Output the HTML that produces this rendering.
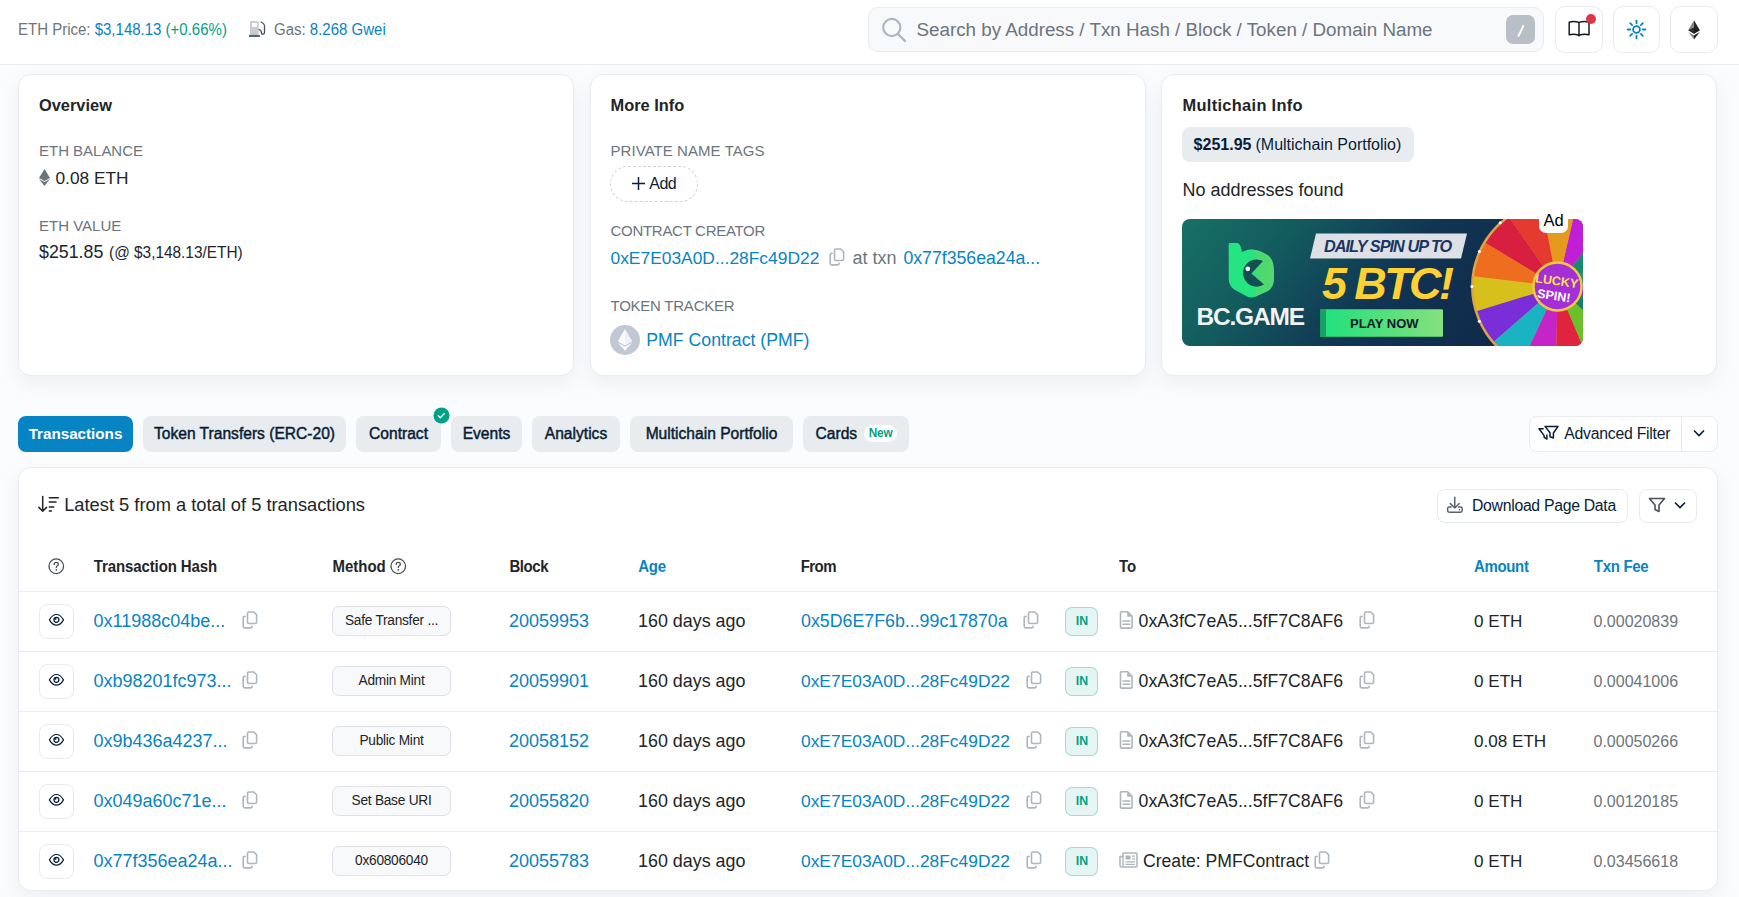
<!DOCTYPE html>
<html><head><meta charset="utf-8"><title>Etherscan</title>
<style>
html,body{margin:0;padding:0;}
body{width:1739px;height:897px;overflow:hidden;position:relative;background:#fbfcfd;font-family:"Liberation Sans",sans-serif;}
.a{position:absolute;}
.t{position:absolute;white-space:nowrap;line-height:1;}
.card{position:absolute;background:#fff;border:1px solid #e9ecef;border-radius:13px;box-sizing:border-box;box-shadow:0 8px 19px rgba(189,197,209,0.22);}
</style></head><body>
<div class="a" style="left:0px;top:0px;width:1739px;height:64px;background:#fff;border-bottom:1px solid #e9ecef;"></div>
<div class="t" style="left:18.00px;top:22.00px;font-size:15px;color:#6c757d;font-weight:400;transform:scaleY(1.15);transform-origin:0 13px;">ETH Price: <span style="color:#0784c3">$3,148.13</span> <span style="color:#00a186">(+0.66%)</span></div>
<svg class="a" style="left:249px;top:21px" width="17" height="17" viewBox="0 0 17 17"><rect x="1" y="0" width="8.7" height="14" rx="1.3" fill="#c8cbd0"/><rect x="2.9" y="1.9" width="5" height="4" fill="#fff"/><rect x="0" y="13.9" width="10.9" height="2.1" fill="#5a6470"/><path d="M10 8.6 Q12 8.8 12.3 10.8 L12.4 12 Q12.8 13.4 14 13.2 Q15.5 13 15.5 11.4 L15.5 4.5 Q15.3 2.6 12.2 1" fill="none" stroke="#495057" stroke-width="1.3" stroke-linecap="round"/></svg>
<div class="t" style="left:274.00px;top:22.00px;font-size:15px;color:#6c757d;font-weight:400;transform:scaleY(1.15);transform-origin:0 13px;">Gas: <span style="color:#0784c3">8.268 Gwei</span></div>
<div class="a" style="left:868px;top:7px;width:676px;height:45px;background:#f8f9fa;border:1px solid #e9ecef;border-radius:10px;box-sizing:border-box;"></div>
<svg class="a" style="left:880px;top:16px" width="28" height="28" viewBox="0 0 28 28"><circle cx="11.8" cy="11.5" r="8.6" fill="none" stroke="#adb5bd" stroke-width="2.2"/><line x1="18" y1="18" x2="25" y2="25" stroke="#adb5bd" stroke-width="2.4" stroke-linecap="round"/></svg>
<div class="t" style="left:916.50px;top:20.60px;font-size:18.8px;color:#6c757d;font-weight:400;">Search by Address / Txn Hash / Block / Token / Domain Name</div>
<div class="a" style="left:1506px;top:15px;width:29px;height:29px;background:#b9bfc6;border-radius:7px;"></div>
<svg class="a" style="left:1506px;top:15px" width="29" height="29" viewBox="0 0 29 29"><line x1="17.6" y1="10.3" x2="12.2" y2="21.5" stroke="#fff" stroke-width="1.9"/></svg>
<div class="a" style="left:1555.2px;top:6px;width:47.4px;height:47.4px;background:#fff;border:1px solid #e9ecef;border-radius:10px;box-sizing:border-box;"></div>
<div class="a" style="left:1612.8px;top:6px;width:47.4px;height:47.4px;background:#fff;border:1px solid #e9ecef;border-radius:10px;box-sizing:border-box;"></div>
<div class="a" style="left:1670.2px;top:6px;width:47.4px;height:47.4px;background:#fff;border:1px solid #e9ecef;border-radius:10px;box-sizing:border-box;"></div>
<svg class="a" style="left:1566px;top:18px" width="26" height="22" viewBox="0 0 26 22"><path d="M3.2 4.2 Q8 2.6 13 4.4 Q18 2.6 23 4.2 V16.8 Q18 15.8 13.6 17 L13 17.8 L12.4 17 Q8 15.8 3.2 16.8 Z M13 4.4 V17.2" fill="none" stroke="#111820" stroke-width="1.45" stroke-linejoin="round"/></svg>
<div class="a" style="left:1586px;top:14px;width:10px;height:10px;border-radius:50%;background:#dc3545"></div>
<svg class="a" style="left:1625px;top:18px" width="23" height="23" viewBox="0 0 23 23"><circle cx="11.5" cy="11.5" r="3.4" fill="none" stroke="#0784c3" stroke-width="1.8"/><line x1="17.70" y1="11.50" x2="20.40" y2="11.50" stroke="#0784c3" stroke-width="1.8" stroke-linecap="round"/><line x1="15.88" y1="15.88" x2="17.79" y2="17.79" stroke="#0784c3" stroke-width="1.8" stroke-linecap="round"/><line x1="11.50" y1="17.70" x2="11.50" y2="20.40" stroke="#0784c3" stroke-width="1.8" stroke-linecap="round"/><line x1="7.12" y1="15.88" x2="5.21" y2="17.79" stroke="#0784c3" stroke-width="1.8" stroke-linecap="round"/><line x1="5.30" y1="11.50" x2="2.60" y2="11.50" stroke="#0784c3" stroke-width="1.8" stroke-linecap="round"/><line x1="7.12" y1="7.12" x2="5.21" y2="5.21" stroke="#0784c3" stroke-width="1.8" stroke-linecap="round"/><line x1="11.50" y1="5.30" x2="11.50" y2="2.60" stroke="#0784c3" stroke-width="1.8" stroke-linecap="round"/><line x1="15.88" y1="7.12" x2="17.79" y2="5.21" stroke="#0784c3" stroke-width="1.8" stroke-linecap="round"/></svg>
<svg class="a" style="left:1687px;top:19px" width="14" height="22" viewBox="0 0 14 22"><path d="M7 1.3 L1.2 11.3 L7 14.7 Z" fill="#8c8480"/><path d="M7 1.3 L12.9 11.3 L7 14.7 Z" fill="#2a2628"/><path d="M1.2 11.3 L7 8.6 L12.9 11.3 L7 14.7 Z" fill="#1a1a1f" opacity="0.85"/><path d="M1.4 12.9 L7 16.2 L7 20.5 Z" fill="#8c8480"/><path d="M12.8 12.9 L7 16.2 L7 20.5 Z" fill="#2a2628"/></svg>
<div class="card" style="left:18.00px;top:74px;width:556.00px;height:302px;"></div>
<div class="card" style="left:589.50px;top:74px;width:556.00px;height:302px;"></div>
<div class="card" style="left:1161.00px;top:74px;width:556.00px;height:302px;"></div>
<div class="t" style="left:39.00px;top:96.50px;font-size:16.4px;color:#212529;font-weight:700;">Overview</div>
<div class="t" style="left:39.00px;top:143.00px;font-size:15px;color:#6c757d;font-weight:400;letter-spacing:-0.02px;">ETH BALANCE</div>
<svg class="a" style="left:39px;top:169px" width="11" height="17" viewBox="0 0 11 17"><path d="M5.5 0 L11 9 L5.5 12 L0 9 Z" fill="#6c757d"/><path d="M5.5 13 L11 10 L5.5 17 L0 10 Z" fill="#6c757d"/></svg>
<div class="t" style="left:55.50px;top:169.60px;font-size:17.3px;color:#212529;font-weight:400;">0.08 ETH</div>
<div class="t" style="left:39.00px;top:218.20px;font-size:15px;color:#6c757d;font-weight:400;letter-spacing:0px;">ETH VALUE</div>
<div class="t" style="left:39.00px;top:243.70px;font-size:17.8px;color:#212529;font-weight:400;">$251.85</div>
<div class="t" style="left:109.00px;top:244.70px;font-size:15.4px;color:#212529;font-weight:400;transform:scaleY(1.1);transform-origin:0 13px;">(@ $3,148.13/ETH)</div>
<div class="t" style="left:610.50px;top:96.50px;font-size:16.4px;color:#212529;font-weight:700;">More Info</div>
<div class="t" style="left:610.50px;top:142.60px;font-size:15px;color:#6c757d;font-weight:400;letter-spacing:0.06px;">PRIVATE NAME TAGS</div>
<div class="a" style="left:609.8px;top:166px;width:88.4px;height:36px;border:1px dashed #ced4da;border-radius:18px;box-sizing:border-box;"></div>
<svg class="a" style="left:632px;top:176.5px" width="13" height="13" viewBox="0 0 13 13"><path d="M6.5 0 V13 M0 6.5 H13" stroke="#081d35" stroke-width="1.45"/></svg>
<div class="t" style="left:649.20px;top:175.80px;font-size:16px;color:#081d35;font-weight:400;letter-spacing:-0.45px;">Add</div>
<div class="t" style="left:610.50px;top:222.60px;font-size:15px;color:#6c757d;font-weight:400;letter-spacing:-0.29px;">CONTRACT CREATOR</div>
<div class="t" style="left:610.50px;top:249.70px;font-size:17.4px;color:#0784c3;font-weight:400;">0xE7E03A0D...28Fc49D22</div>
<svg class="a" style="left:827.50px;top:247.30px" width="17" height="19" viewBox="0 0 17 19"><path d="M8 2 H12.8 L15.6 4.8 V12 Q15.6 13.5 14.1 13.5 H8 Q6.5 13.5 6.5 12 V3.5 Q6.5 2 8 2 Z" fill="none" stroke="#adb5bd" stroke-width="1.6" stroke-linejoin="round"/><path d="M4 6.4 H3.8 Q2.2 6.4 2.2 8 V16.3 Q2.2 17.9 3.8 17.9 H9.7 Q11.2 17.9 11.2 16.3" fill="none" stroke="#adb5bd" stroke-width="1.6" stroke-linecap="round"/></svg>
<div class="t" style="left:852.60px;top:248.70px;font-size:18px;color:#6c757d;font-weight:400;">at txn</div>
<div class="t" style="left:903.40px;top:249.70px;font-size:17.7px;color:#0784c3;font-weight:400;">0x77f356ea24a...</div>
<div class="t" style="left:610.50px;top:298.00px;font-size:15px;color:#6c757d;font-weight:400;letter-spacing:-0.24px;">TOKEN TRACKER</div>
<svg class="a" style="left:610px;top:325px" width="30" height="30" viewBox="0 0 30 30"><circle cx="15" cy="15" r="15" fill="#bfc8d3"/><path d="M15 4 L22 16.2 L15 20.4 L7.8 16.2 Z" fill="#fafbfc"/><path d="M15 4 L22 16.2 L15 20.4 Z" fill="#eef0f3"/><path d="M15 21.8 L22 17.8 L15 25.7 L7.8 17.8 Z" fill="#fafbfc"/></svg>
<div class="t" style="left:646.30px;top:332.00px;font-size:17.7px;color:#0784c3;font-weight:400;">PMF Contract (PMF)</div>
<div class="t" style="left:1182.50px;top:96.60px;font-size:16.4px;color:#212529;font-weight:700;letter-spacing:0.32px;">Multichain Info</div>
<div class="a" style="left:1182px;top:127px;width:232px;height:35px;background:#e9ecef;border-radius:8px;"></div>
<div class="t" style="left:1193.60px;top:137.00px;font-size:16px;color:#081d35;font-weight:700;">$251.95</div>
<div class="t" style="left:1255.50px;top:137.00px;font-size:16px;color:#081d35;font-weight:400;">(Multichain Portfolio)</div>
<div class="t" style="left:1182.50px;top:180.80px;font-size:18px;color:#212529;font-weight:400;">No addresses found</div>
<svg class="a" style="left:1182px;top:219px" width="401" height="127" viewBox="0 0 401 127">
<defs>
<linearGradient id="bg" x1="0" y1="0" x2="1" y2="0.25"><stop offset="0" stop-color="#177166"/><stop offset="0.28" stop-color="#135b5e"/><stop offset="0.6" stop-color="#103553"/><stop offset="1" stop-color="#10284a"/></linearGradient>
<clipPath id="cp"><rect x="0" y="0" width="401" height="127" rx="8"/></clipPath>
<linearGradient id="btn" x1="0" y1="0" x2="1" y2="0"><stop offset="0" stop-color="#22e07c"/><stop offset="1" stop-color="#86e07e"/></linearGradient>
<linearGradient id="lg" x1="0" y1="0" x2="1" y2="0"><stop offset="0.55" stop-color="#26e482"/><stop offset="0.6" stop-color="#48d873"/><stop offset="1" stop-color="#58d86c"/></linearGradient>
</defs>
<g clip-path="url(#cp)">
<rect width="401" height="127" fill="url(#bg)"/>
<path d="M46.7 25 Q46.7 24 48 24 L55 24 Q58.5 24 60 33 Q66 30 71 30.4 Q80 31.5 87 37 Q92 42 92 52 L92 60 Q92 68 86 72 L74 77.5 Q69.4 79.5 65 77.5 L53 71 Q46.7 67 46.7 60 Z" fill="url(#lg)"/>
<path d="M69.4 54.5 L81 42 A13.6 13.6 0 1 0 82 65.5 Z" fill="#124f52"/>
<circle cx="65.8" cy="49.8" r="2.4" fill="#f4f4f4"/>
<text x="14.5" y="106.2" font-family="Liberation Sans" font-weight="700" font-size="24.5" fill="#f2f2f2" letter-spacing="-1.2">BC.GAME</text>
<path d="M134 14.5 L285 14.5 L279 39.5 L128 39.5 Z" fill="#dde1e6"/>
<text x="142" y="33.2" font-family="Liberation Sans" font-weight="700" font-style="italic" font-size="16.3" fill="#1b3563" letter-spacing="-1">DAILY SPIN UP TO</text>
<text x="140" y="80" font-family="Liberation Sans" font-weight="700" font-style="italic" font-size="45" fill="#ffd134" letter-spacing="-2.6">5 BTC!</text>
<rect x="138" y="90" width="122" height="28" fill="#1a9e62"/>
<rect x="144" y="90.5" width="117" height="27" fill="url(#btn)"/>
<text x="168" y="108.5" font-family="Liberation Sans" font-weight="700" font-size="13" fill="#0b1a2a">PLAY NOW</text>
<g transform="translate(375.5 67.4)">
<circle r="86.5" fill="#e0a448"/>
<path d="M0 0 L-80.3 24.6 A84 84 0 0 1 -83.4 -10.2 Z" fill="#d8c01c"/><path d="M0 0 L-63.4 55.1 A84 84 0 0 1 -80.3 24.6 Z" fill="#7a2ed8"/><path d="M0 0 L-35.5 76.1 A84 84 0 0 1 -63.4 55.1 Z" fill="#19b3c2"/><path d="M0 0 L-1.5 84.0 A84 84 0 0 1 -35.5 76.1 Z" fill="#c524c8"/><path d="M0 0 L32.8 77.3 A84 84 0 0 1 -1.5 84.0 Z" fill="#e0243f"/><path d="M0 0 L61.4 57.3 A84 84 0 0 1 32.8 77.3 Z" fill="#6bc12a"/><path d="M0 0 L79.4 27.3 A84 84 0 0 1 61.4 57.3 Z" fill="#17806a"/><path d="M0 0 L83.7 -7.3 A84 84 0 0 1 79.4 27.3 Z" fill="#9a2bd0"/><path d="M0 0 L73.5 -40.7 A84 84 0 0 1 83.7 -7.3 Z" fill="#1a9a73"/><path d="M0 0 L50.6 -67.1 A84 84 0 0 1 73.5 -40.7 Z" fill="#138a72"/><path d="M0 0 L18.9 -81.8 A84 84 0 0 1 50.6 -67.1 Z" fill="#c01fd6"/><path d="M0 0 L-16.0 -82.5 A84 84 0 0 1 18.9 -81.8 Z" fill="#e59a1e"/><path d="M0 0 L-48.2 -68.8 A84 84 0 0 1 -16.0 -82.5 Z" fill="#e53a2f"/><path d="M0 0 L-72.0 -43.3 A84 84 0 0 1 -48.2 -68.8 Z" fill="#d81f3f"/><path d="M0 0 L-83.4 -10.2 A84 84 0 0 1 -72.0 -43.3 Z" fill="#ee6d1e"/><circle cx="-85.6" cy="-0.0" r="1.5" fill="#fff"/><circle cx="-78.2" cy="-34.8" r="1.5" fill="#fff"/><circle cx="-57.3" cy="-63.6" r="1.5" fill="#fff"/><circle cx="-26.5" cy="-81.4" r="1.5" fill="#fff"/><circle cx="8.9" cy="-85.1" r="1.5" fill="#fff"/><circle cx="42.8" cy="-74.1" r="1.5" fill="#fff"/><circle cx="69.3" cy="-50.3" r="1.5" fill="#fff"/><circle cx="83.7" cy="-17.8" r="1.5" fill="#fff"/><circle cx="83.7" cy="17.8" r="1.5" fill="#fff"/><circle cx="69.3" cy="50.3" r="1.5" fill="#fff"/><circle cx="42.8" cy="74.1" r="1.5" fill="#fff"/><circle cx="8.9" cy="85.1" r="1.5" fill="#fff"/><circle cx="-26.5" cy="81.4" r="1.5" fill="#fff"/><circle cx="-57.3" cy="63.6" r="1.5" fill="#fff"/><circle cx="-78.2" cy="34.8" r="1.5" fill="#fff"/><circle r="24" fill="#a52fd6" stroke="#f3c640" stroke-width="2.5"/>
<text x="-23" y="-1" font-family="Liberation Sans" font-weight="700" font-size="12.5" fill="#ffe14d" transform="rotate(8)">LUCKY</text>
<text x="-19" y="14" font-family="Liberation Sans" font-weight="700" font-size="12.5" fill="#fff" transform="rotate(8)">SPIN!</text>
</g>
</g></svg>
<div class="a" style="left:1539px;top:208.5px;width:29px;height:24.5px;background:#fff;border-radius:7px;"></div>
<div class="t" style="left:1543.50px;top:212.00px;font-size:16.5px;color:#000;font-weight:400;">Ad</div>
<div class="a" style="left:18px;top:416px;width:115px;height:36px;background:#0784c3;border-radius:8px;"></div>
<div class="a" style="left:18px;top:416px;width:115px;height:36px;text-align:center;"><div class="t" style="position:relative;top:10.20px;font-size:15.6px;color:#fff;-webkit-text-stroke:0.45px #fff;font-weight:700;font-size:15.2px;-webkit-text-stroke:0;">Transactions</div></div>
<div class="a" style="left:143px;top:416px;width:203px;height:36px;background:#e9ecef;border-radius:8px;"></div>
<div class="a" style="left:143px;top:416px;width:203px;height:36px;text-align:center;"><div class="t" style="position:relative;top:10.20px;font-size:15.6px;color:#081d35;-webkit-text-stroke:0.45px #081d35;">Token Transfers (ERC-20)</div></div>
<div class="a" style="left:356px;top:416px;width:85px;height:36px;background:#e9ecef;border-radius:8px;"></div>
<div class="a" style="left:356px;top:416px;width:85px;height:36px;text-align:center;"><div class="t" style="position:relative;top:10.20px;font-size:15.6px;color:#081d35;-webkit-text-stroke:0.45px #081d35;">Contract</div></div>
<div class="a" style="left:451px;top:416px;width:71px;height:36px;background:#e9ecef;border-radius:8px;"></div>
<div class="a" style="left:451px;top:416px;width:71px;height:36px;text-align:center;"><div class="t" style="position:relative;top:10.20px;font-size:15.6px;color:#081d35;-webkit-text-stroke:0.45px #081d35;">Events</div></div>
<div class="a" style="left:532px;top:416px;width:88px;height:36px;background:#e9ecef;border-radius:8px;"></div>
<div class="a" style="left:532px;top:416px;width:88px;height:36px;text-align:center;"><div class="t" style="position:relative;top:10.20px;font-size:15.6px;color:#081d35;-webkit-text-stroke:0.45px #081d35;">Analytics</div></div>
<div class="a" style="left:630px;top:416px;width:163px;height:36px;background:#e9ecef;border-radius:8px;"></div>
<div class="a" style="left:630px;top:416px;width:163px;height:36px;text-align:center;"><div class="t" style="position:relative;top:10.20px;font-size:15.6px;color:#081d35;-webkit-text-stroke:0.45px #081d35;">Multichain Portfolio</div></div>
<div class="a" style="left:803px;top:416px;width:106px;height:36px;background:#e9ecef;border-radius:8px;"></div>
<div class="t" style="left:815.50px;top:426.20px;font-size:15.6px;color:#081d35;font-weight:400;-webkit-text-stroke:0.45px #081d35;">Cards</div>
<div class="a" style="left:864px;top:425px;width:33px;height:17px;background:#fff;border-radius:9px;"></div>
<div class="t" style="left:868.80px;top:428.00px;font-size:11.8px;color:#00a186;font-weight:700;letter-spacing:-0.2px;transform:scaleY(1.12);transform-origin:0 9px;">New</div>
<svg class="a" style="left:432.5px;top:406.5px" width="17" height="17" viewBox="0 0 17 17"><circle cx="8.5" cy="8.5" r="8" fill="#00a186"/><path d="M5.3 8.6 L7.3 10.7 L11.4 6.6" fill="none" stroke="#fff" stroke-width="1.35" stroke-linecap="round" stroke-linejoin="round"/></svg>
<div class="a" style="left:1528.5px;top:416px;width:189px;height:36px;background:#fff;border:1px solid #e9ecef;border-radius:8px;box-sizing:border-box;"></div>
<div class="a" style="left:1681px;top:417px;width:1px;height:34px;background:#e9ecef;"></div>
<svg class="a" style="left:1536px;top:422px" width="25" height="20" viewBox="0 0 25 20"><path d="M9.05 4.4 H22.1 L17.4 11 V16 L14 14.7 V10.7 Z" fill="none" stroke="#081d35" stroke-width="1.5" stroke-linejoin="round"/><path d="M7.7 6.7 H3 L8 13.4 L8.2 15.4 L10.9 17 V12.4" fill="none" stroke="#081d35" stroke-width="1.5" stroke-linejoin="round"/></svg>
<div class="t" style="left:1564.30px;top:425.70px;font-size:15.8px;color:#081d35;font-weight:400;letter-spacing:-0.25px;">Advanced Filter</div>
<svg class="a" style="left:1693px;top:429px" width="12" height="9" viewBox="0 0 12 9"><path d="M1 1.5 L6 6.5 L11 1.5" fill="none" stroke="#081d35" stroke-width="1.6"/></svg>
<div class="card" style="left:18px;top:467px;width:1700px;height:424px;"></div>
<svg class="a" style="left:34px;top:492px" width="30" height="26" viewBox="0 0 30 26"><path d="M8.7 4.6 V19.2 M4.9 15.4 L8.7 19.2 L12.6 15.4" fill="none" stroke="#212529" stroke-width="1.5" stroke-linecap="round" stroke-linejoin="round"/><path d="M15.3 5.8 H24.3 M15.3 10.1 H22 M15.3 14.9 H19.7 M15.3 19.1 H17.4" stroke="#212529" stroke-width="1.5" stroke-linecap="round"/></svg>
<div class="t" style="left:64.20px;top:496.00px;font-size:18.3px;color:#212529;font-weight:400;">Latest 5 from a total of 5 transactions</div>
<div class="a" style="left:1436.5px;top:488.5px;width:191px;height:34px;background:#fff;border:1px solid #e9ecef;border-radius:8px;box-sizing:border-box;"></div>
<svg class="a" style="left:1442px;top:492px" width="26" height="26" viewBox="0 0 26 26"><path d="M12.75 5.2 V16 M8.3 11.5 L12.75 16 L17.2 11.5" fill="none" stroke="#59636d" stroke-width="1.5" stroke-linecap="round" stroke-linejoin="round"/><path d="M9.2 15.1 H7.3 Q5.6 15.1 5.6 16.8 V18.6 Q5.6 20.3 7.3 20.3 H18.5 Q20.2 20.3 20.2 18.6 V16.8 Q20.2 15.1 18.5 15.1 H16.4" fill="none" stroke="#59636d" stroke-width="1.5" stroke-linecap="round"/><circle cx="17.4" cy="17.7" r="0.8" fill="#59636d"/></svg>
<div class="t" style="left:1472.00px;top:497.60px;font-size:15.8px;color:#081d35;font-weight:400;letter-spacing:-0.3px;">Download Page Data</div>
<div class="a" style="left:1638.5px;top:488.5px;width:58px;height:34px;background:#fff;border:1px solid #e9ecef;border-radius:8px;box-sizing:border-box;"></div>
<svg class="a" style="left:1648px;top:497px" width="18" height="16" viewBox="0 0 18 16"><path d="M1.5 1.5 H16.5 L11 8 V14.5 L7 12.5 V8 Z" fill="none" stroke="#495057" stroke-width="1.6" stroke-linejoin="round"/></svg>
<svg class="a" style="left:1674px;top:501px" width="12" height="9" viewBox="0 0 12 9"><path d="M1 1.5 L6 6.5 L11 1.5" fill="none" stroke="#081d35" stroke-width="1.6"/></svg>
<svg class="a" style="left:48px;top:558px" width="17" height="17" viewBox="0 0 17 17"><circle cx="8.25" cy="8.25" r="7.3" fill="none" stroke="#495057" stroke-width="1.3"/><path d="M6.2 6.4 Q6.2 4.4 8.3 4.4 Q10.3 4.4 10.3 6.2 Q10.3 7.4 9 8 Q8.3 8.4 8.3 9.5" fill="none" stroke="#495057" stroke-width="1.3" stroke-linecap="round"/><circle cx="8.3" cy="11.8" r="0.85" fill="#495057"/></svg>
<div class="t" style="left:93.80px;top:559.00px;font-size:15px;color:#212529;font-weight:700;letter-spacing:-0.11px;transform:scaleY(1.1);transform-origin:0 13px;">Transaction Hash</div>
<div class="t" style="left:332.40px;top:559.00px;font-size:15px;color:#212529;font-weight:700;transform:scaleY(1.1);transform-origin:0 13px;">Method</div>
<svg class="a" style="left:390px;top:558px" width="17" height="17" viewBox="0 0 17 17"><circle cx="8.25" cy="8.25" r="7.3" fill="none" stroke="#495057" stroke-width="1.3"/><path d="M6.2 6.4 Q6.2 4.4 8.3 4.4 Q10.3 4.4 10.3 6.2 Q10.3 7.4 9 8 Q8.3 8.4 8.3 9.5" fill="none" stroke="#495057" stroke-width="1.3" stroke-linecap="round"/><circle cx="8.3" cy="11.8" r="0.85" fill="#495057"/></svg>
<div class="t" style="left:509.40px;top:559.00px;font-size:15px;color:#212529;font-weight:700;letter-spacing:-0.4px;transform:scaleY(1.1);transform-origin:0 13px;">Block</div>
<div class="t" style="left:638.30px;top:559.00px;font-size:15px;color:#0784c3;font-weight:700;letter-spacing:-0.33px;transform:scaleY(1.1);transform-origin:0 13px;">Age</div>
<div class="t" style="left:800.70px;top:559.00px;font-size:15px;color:#212529;font-weight:700;letter-spacing:-0.55px;transform:scaleY(1.1);transform-origin:0 13px;">From</div>
<div class="t" style="left:1119.00px;top:559.00px;font-size:15px;color:#212529;font-weight:700;transform:scaleY(1.1);transform-origin:0 13px;">To</div>
<div class="t" style="left:1474.00px;top:559.00px;font-size:15px;color:#0784c3;font-weight:700;letter-spacing:-0.35px;transform:scaleY(1.1);transform-origin:0 13px;">Amount</div>
<div class="t" style="left:1593.80px;top:559.00px;font-size:15px;color:#0784c3;font-weight:700;letter-spacing:-0.31px;transform:scaleY(1.1);transform-origin:0 13px;">Txn Fee</div>
<div class="a" style="left:18px;top:591px;width:1699px;height:1px;background:#e9ecef;"></div>
<div class="a" style="left:39px;top:604px;width:35px;height:35px;background:#fff;border:1px solid #e9ecef;border-radius:8px;box-sizing:border-box;"></div>
<svg class="a" style="left:42px;top:606px" width="28" height="28" viewBox="0 0 28 28"><path d="M7.4 13.85 Q10.5 8.5 14.45 8.5 Q18.4 8.5 21.5 13.85 Q18.4 19.2 14.45 19.2 Q10.5 19.2 7.4 13.85 Z" fill="none" stroke="#081d35" stroke-width="1.2" stroke-linejoin="round"/><circle cx="14.4" cy="13.8" r="2.5" fill="none" stroke="#081d35" stroke-width="1.25"/><circle cx="13.5" cy="12.9" r="0.95" fill="#081d35"/></svg>
<div class="t" style="left:93.50px;top:612.00px;font-size:18px;color:#0784c3;font-weight:400;">0x11988c04be...</div>
<svg class="a" style="left:241.30px;top:610.30px" width="17" height="19" viewBox="0 0 17 19"><path d="M8 2 H12.8 L15.6 4.8 V12 Q15.6 13.5 14.1 13.5 H8 Q6.5 13.5 6.5 12 V3.5 Q6.5 2 8 2 Z" fill="none" stroke="#adb5bd" stroke-width="1.6" stroke-linejoin="round"/><path d="M4 6.4 H3.8 Q2.2 6.4 2.2 8 V16.3 Q2.2 17.9 3.8 17.9 H9.7 Q11.2 17.9 11.2 16.3" fill="none" stroke="#adb5bd" stroke-width="1.6" stroke-linecap="round"/></svg>
<div class="a" style="left:332px;top:606px;width:119px;height:30px;background:#f8f9fa;border:1px solid #dee2e6;border-radius:7px;box-sizing:border-box;"></div>
<div class="a" style="left:332px;top:606px;width:119px;height:30px;text-align:center"><div class="t" style="position:relative;top:8.00px;font-size:13.7px;letter-spacing:-0.25px;color:#212529;transform:scaleY(1.13);transform-origin:0 11px">Safe Transfer ...</div></div>
<div class="t" style="left:509.00px;top:612.00px;font-size:18px;color:#0784c3;font-weight:400;">20059953</div>
<div class="t" style="left:638.00px;top:613.00px;font-size:17.9px;color:#212529;font-weight:400;">160 days ago</div>
<div class="t" style="left:801.00px;top:613.00px;font-size:17.8px;color:#0784c3;font-weight:400;">0x5D6E7F6b...99c17870a</div>
<svg class="a" style="left:1022.00px;top:610.30px" width="17" height="19" viewBox="0 0 17 19"><path d="M8 2 H12.8 L15.6 4.8 V12 Q15.6 13.5 14.1 13.5 H8 Q6.5 13.5 6.5 12 V3.5 Q6.5 2 8 2 Z" fill="none" stroke="#adb5bd" stroke-width="1.6" stroke-linejoin="round"/><path d="M4 6.4 H3.8 Q2.2 6.4 2.2 8 V16.3 Q2.2 17.9 3.8 17.9 H9.7 Q11.2 17.9 11.2 16.3" fill="none" stroke="#adb5bd" stroke-width="1.6" stroke-linecap="round"/></svg>
<div class="a" style="left:1065px;top:607px;width:33px;height:29px;background:rgba(0,161,134,0.1);border:1px solid rgba(0,161,134,0.3);border-radius:7px;box-sizing:border-box;"></div>
<div class="t" style="left:1075.80px;top:615.00px;font-size:12.3px;color:#00a186;font-weight:700;">IN</div>
<svg class="a" style="left:1112px;top:604.0px" width="30" height="30" viewBox="0 0 30 30"><path d="M9.4 7.8 H15.6 L20.1 12.3 V23.1 Q20.1 24.1 19.1 24.1 H9.4 Q8.5 24.1 8.5 23.1 V8.8 Q8.5 7.8 9.4 7.8 Z" fill="none" stroke="#adb5bd" stroke-width="1.6" stroke-linejoin="round"/><path d="M15.2 7.8 V12.7 H20.1 Z" fill="#adb5bd"/><path d="M11 17 H17.7 M11 20.2 H17.7" stroke="#adb5bd" stroke-width="1.5" stroke-linecap="round"/></svg>
<div class="t" style="left:1138.60px;top:613.00px;font-size:17.7px;color:#212529;font-weight:400;">0xA3fC7eA5...5fF7C8AF6</div>
<svg class="a" style="left:1357.50px;top:610.30px" width="17" height="19" viewBox="0 0 17 19"><path d="M8 2 H12.8 L15.6 4.8 V12 Q15.6 13.5 14.1 13.5 H8 Q6.5 13.5 6.5 12 V3.5 Q6.5 2 8 2 Z" fill="none" stroke="#adb5bd" stroke-width="1.6" stroke-linejoin="round"/><path d="M4 6.4 H3.8 Q2.2 6.4 2.2 8 V16.3 Q2.2 17.9 3.8 17.9 H9.7 Q11.2 17.9 11.2 16.3" fill="none" stroke="#adb5bd" stroke-width="1.6" stroke-linecap="round"/></svg>
<div class="t" style="left:1474.00px;top:613.00px;font-size:17.1px;color:#212529;font-weight:400;">0 ETH</div>
<div class="t" style="left:1593.50px;top:613.50px;font-size:16px;color:#6c757d;font-weight:400;">0.00020839</div>
<div class="a" style="left:18px;top:651px;width:1699px;height:1px;background:#e9ecef;"></div>
<div class="a" style="left:39px;top:664px;width:35px;height:35px;background:#fff;border:1px solid #e9ecef;border-radius:8px;box-sizing:border-box;"></div>
<svg class="a" style="left:42px;top:666px" width="28" height="28" viewBox="0 0 28 28"><path d="M7.4 13.85 Q10.5 8.5 14.45 8.5 Q18.4 8.5 21.5 13.85 Q18.4 19.2 14.45 19.2 Q10.5 19.2 7.4 13.85 Z" fill="none" stroke="#081d35" stroke-width="1.2" stroke-linejoin="round"/><circle cx="14.4" cy="13.8" r="2.5" fill="none" stroke="#081d35" stroke-width="1.25"/><circle cx="13.5" cy="12.9" r="0.95" fill="#081d35"/></svg>
<div class="t" style="left:93.50px;top:672.00px;font-size:18px;color:#0784c3;font-weight:400;">0xb98201fc973...</div>
<svg class="a" style="left:241.30px;top:670.30px" width="17" height="19" viewBox="0 0 17 19"><path d="M8 2 H12.8 L15.6 4.8 V12 Q15.6 13.5 14.1 13.5 H8 Q6.5 13.5 6.5 12 V3.5 Q6.5 2 8 2 Z" fill="none" stroke="#adb5bd" stroke-width="1.6" stroke-linejoin="round"/><path d="M4 6.4 H3.8 Q2.2 6.4 2.2 8 V16.3 Q2.2 17.9 3.8 17.9 H9.7 Q11.2 17.9 11.2 16.3" fill="none" stroke="#adb5bd" stroke-width="1.6" stroke-linecap="round"/></svg>
<div class="a" style="left:332px;top:666px;width:119px;height:30px;background:#f8f9fa;border:1px solid #dee2e6;border-radius:7px;box-sizing:border-box;"></div>
<div class="a" style="left:332px;top:666px;width:119px;height:30px;text-align:center"><div class="t" style="position:relative;top:8.00px;font-size:13.7px;letter-spacing:-0.25px;color:#212529;transform:scaleY(1.13);transform-origin:0 11px">Admin Mint</div></div>
<div class="t" style="left:509.00px;top:672.00px;font-size:18px;color:#0784c3;font-weight:400;">20059901</div>
<div class="t" style="left:638.00px;top:673.00px;font-size:17.9px;color:#212529;font-weight:400;">160 days ago</div>
<div class="t" style="left:801.00px;top:673.00px;font-size:17.4px;color:#0784c3;font-weight:400;">0xE7E03A0D...28Fc49D22</div>
<svg class="a" style="left:1025.10px;top:670.30px" width="17" height="19" viewBox="0 0 17 19"><path d="M8 2 H12.8 L15.6 4.8 V12 Q15.6 13.5 14.1 13.5 H8 Q6.5 13.5 6.5 12 V3.5 Q6.5 2 8 2 Z" fill="none" stroke="#adb5bd" stroke-width="1.6" stroke-linejoin="round"/><path d="M4 6.4 H3.8 Q2.2 6.4 2.2 8 V16.3 Q2.2 17.9 3.8 17.9 H9.7 Q11.2 17.9 11.2 16.3" fill="none" stroke="#adb5bd" stroke-width="1.6" stroke-linecap="round"/></svg>
<div class="a" style="left:1065px;top:667px;width:33px;height:29px;background:rgba(0,161,134,0.1);border:1px solid rgba(0,161,134,0.3);border-radius:7px;box-sizing:border-box;"></div>
<div class="t" style="left:1075.80px;top:675.00px;font-size:12.3px;color:#00a186;font-weight:700;">IN</div>
<svg class="a" style="left:1112px;top:664.0px" width="30" height="30" viewBox="0 0 30 30"><path d="M9.4 7.8 H15.6 L20.1 12.3 V23.1 Q20.1 24.1 19.1 24.1 H9.4 Q8.5 24.1 8.5 23.1 V8.8 Q8.5 7.8 9.4 7.8 Z" fill="none" stroke="#adb5bd" stroke-width="1.6" stroke-linejoin="round"/><path d="M15.2 7.8 V12.7 H20.1 Z" fill="#adb5bd"/><path d="M11 17 H17.7 M11 20.2 H17.7" stroke="#adb5bd" stroke-width="1.5" stroke-linecap="round"/></svg>
<div class="t" style="left:1138.60px;top:673.00px;font-size:17.7px;color:#212529;font-weight:400;">0xA3fC7eA5...5fF7C8AF6</div>
<svg class="a" style="left:1357.50px;top:670.30px" width="17" height="19" viewBox="0 0 17 19"><path d="M8 2 H12.8 L15.6 4.8 V12 Q15.6 13.5 14.1 13.5 H8 Q6.5 13.5 6.5 12 V3.5 Q6.5 2 8 2 Z" fill="none" stroke="#adb5bd" stroke-width="1.6" stroke-linejoin="round"/><path d="M4 6.4 H3.8 Q2.2 6.4 2.2 8 V16.3 Q2.2 17.9 3.8 17.9 H9.7 Q11.2 17.9 11.2 16.3" fill="none" stroke="#adb5bd" stroke-width="1.6" stroke-linecap="round"/></svg>
<div class="t" style="left:1474.00px;top:673.00px;font-size:17.1px;color:#212529;font-weight:400;">0 ETH</div>
<div class="t" style="left:1593.50px;top:673.50px;font-size:16px;color:#6c757d;font-weight:400;">0.00041006</div>
<div class="a" style="left:18px;top:711px;width:1699px;height:1px;background:#e9ecef;"></div>
<div class="a" style="left:39px;top:724px;width:35px;height:35px;background:#fff;border:1px solid #e9ecef;border-radius:8px;box-sizing:border-box;"></div>
<svg class="a" style="left:42px;top:726px" width="28" height="28" viewBox="0 0 28 28"><path d="M7.4 13.85 Q10.5 8.5 14.45 8.5 Q18.4 8.5 21.5 13.85 Q18.4 19.2 14.45 19.2 Q10.5 19.2 7.4 13.85 Z" fill="none" stroke="#081d35" stroke-width="1.2" stroke-linejoin="round"/><circle cx="14.4" cy="13.8" r="2.5" fill="none" stroke="#081d35" stroke-width="1.25"/><circle cx="13.5" cy="12.9" r="0.95" fill="#081d35"/></svg>
<div class="t" style="left:93.50px;top:732.00px;font-size:18px;color:#0784c3;font-weight:400;">0x9b436a4237...</div>
<svg class="a" style="left:241.30px;top:730.30px" width="17" height="19" viewBox="0 0 17 19"><path d="M8 2 H12.8 L15.6 4.8 V12 Q15.6 13.5 14.1 13.5 H8 Q6.5 13.5 6.5 12 V3.5 Q6.5 2 8 2 Z" fill="none" stroke="#adb5bd" stroke-width="1.6" stroke-linejoin="round"/><path d="M4 6.4 H3.8 Q2.2 6.4 2.2 8 V16.3 Q2.2 17.9 3.8 17.9 H9.7 Q11.2 17.9 11.2 16.3" fill="none" stroke="#adb5bd" stroke-width="1.6" stroke-linecap="round"/></svg>
<div class="a" style="left:332px;top:726px;width:119px;height:30px;background:#f8f9fa;border:1px solid #dee2e6;border-radius:7px;box-sizing:border-box;"></div>
<div class="a" style="left:332px;top:726px;width:119px;height:30px;text-align:center"><div class="t" style="position:relative;top:8.00px;font-size:13.7px;letter-spacing:-0.25px;color:#212529;transform:scaleY(1.13);transform-origin:0 11px">Public Mint</div></div>
<div class="t" style="left:509.00px;top:732.00px;font-size:18px;color:#0784c3;font-weight:400;">20058152</div>
<div class="t" style="left:638.00px;top:733.00px;font-size:17.9px;color:#212529;font-weight:400;">160 days ago</div>
<div class="t" style="left:801.00px;top:733.00px;font-size:17.4px;color:#0784c3;font-weight:400;">0xE7E03A0D...28Fc49D22</div>
<svg class="a" style="left:1025.10px;top:730.30px" width="17" height="19" viewBox="0 0 17 19"><path d="M8 2 H12.8 L15.6 4.8 V12 Q15.6 13.5 14.1 13.5 H8 Q6.5 13.5 6.5 12 V3.5 Q6.5 2 8 2 Z" fill="none" stroke="#adb5bd" stroke-width="1.6" stroke-linejoin="round"/><path d="M4 6.4 H3.8 Q2.2 6.4 2.2 8 V16.3 Q2.2 17.9 3.8 17.9 H9.7 Q11.2 17.9 11.2 16.3" fill="none" stroke="#adb5bd" stroke-width="1.6" stroke-linecap="round"/></svg>
<div class="a" style="left:1065px;top:727px;width:33px;height:29px;background:rgba(0,161,134,0.1);border:1px solid rgba(0,161,134,0.3);border-radius:7px;box-sizing:border-box;"></div>
<div class="t" style="left:1075.80px;top:735.00px;font-size:12.3px;color:#00a186;font-weight:700;">IN</div>
<svg class="a" style="left:1112px;top:724.0px" width="30" height="30" viewBox="0 0 30 30"><path d="M9.4 7.8 H15.6 L20.1 12.3 V23.1 Q20.1 24.1 19.1 24.1 H9.4 Q8.5 24.1 8.5 23.1 V8.8 Q8.5 7.8 9.4 7.8 Z" fill="none" stroke="#adb5bd" stroke-width="1.6" stroke-linejoin="round"/><path d="M15.2 7.8 V12.7 H20.1 Z" fill="#adb5bd"/><path d="M11 17 H17.7 M11 20.2 H17.7" stroke="#adb5bd" stroke-width="1.5" stroke-linecap="round"/></svg>
<div class="t" style="left:1138.60px;top:733.00px;font-size:17.7px;color:#212529;font-weight:400;">0xA3fC7eA5...5fF7C8AF6</div>
<svg class="a" style="left:1357.50px;top:730.30px" width="17" height="19" viewBox="0 0 17 19"><path d="M8 2 H12.8 L15.6 4.8 V12 Q15.6 13.5 14.1 13.5 H8 Q6.5 13.5 6.5 12 V3.5 Q6.5 2 8 2 Z" fill="none" stroke="#adb5bd" stroke-width="1.6" stroke-linejoin="round"/><path d="M4 6.4 H3.8 Q2.2 6.4 2.2 8 V16.3 Q2.2 17.9 3.8 17.9 H9.7 Q11.2 17.9 11.2 16.3" fill="none" stroke="#adb5bd" stroke-width="1.6" stroke-linecap="round"/></svg>
<div class="t" style="left:1474.00px;top:733.00px;font-size:17.1px;color:#212529;font-weight:400;">0.08 ETH</div>
<div class="t" style="left:1593.50px;top:733.50px;font-size:16px;color:#6c757d;font-weight:400;">0.00050266</div>
<div class="a" style="left:18px;top:771px;width:1699px;height:1px;background:#e9ecef;"></div>
<div class="a" style="left:39px;top:784px;width:35px;height:35px;background:#fff;border:1px solid #e9ecef;border-radius:8px;box-sizing:border-box;"></div>
<svg class="a" style="left:42px;top:786px" width="28" height="28" viewBox="0 0 28 28"><path d="M7.4 13.85 Q10.5 8.5 14.45 8.5 Q18.4 8.5 21.5 13.85 Q18.4 19.2 14.45 19.2 Q10.5 19.2 7.4 13.85 Z" fill="none" stroke="#081d35" stroke-width="1.2" stroke-linejoin="round"/><circle cx="14.4" cy="13.8" r="2.5" fill="none" stroke="#081d35" stroke-width="1.25"/><circle cx="13.5" cy="12.9" r="0.95" fill="#081d35"/></svg>
<div class="t" style="left:93.50px;top:792.00px;font-size:18px;color:#0784c3;font-weight:400;">0x049a60c71e...</div>
<svg class="a" style="left:241.30px;top:790.30px" width="17" height="19" viewBox="0 0 17 19"><path d="M8 2 H12.8 L15.6 4.8 V12 Q15.6 13.5 14.1 13.5 H8 Q6.5 13.5 6.5 12 V3.5 Q6.5 2 8 2 Z" fill="none" stroke="#adb5bd" stroke-width="1.6" stroke-linejoin="round"/><path d="M4 6.4 H3.8 Q2.2 6.4 2.2 8 V16.3 Q2.2 17.9 3.8 17.9 H9.7 Q11.2 17.9 11.2 16.3" fill="none" stroke="#adb5bd" stroke-width="1.6" stroke-linecap="round"/></svg>
<div class="a" style="left:332px;top:786px;width:119px;height:30px;background:#f8f9fa;border:1px solid #dee2e6;border-radius:7px;box-sizing:border-box;"></div>
<div class="a" style="left:332px;top:786px;width:119px;height:30px;text-align:center"><div class="t" style="position:relative;top:8.00px;font-size:13.7px;letter-spacing:-0.25px;color:#212529;transform:scaleY(1.13);transform-origin:0 11px">Set Base URI</div></div>
<div class="t" style="left:509.00px;top:792.00px;font-size:18px;color:#0784c3;font-weight:400;">20055820</div>
<div class="t" style="left:638.00px;top:793.00px;font-size:17.9px;color:#212529;font-weight:400;">160 days ago</div>
<div class="t" style="left:801.00px;top:793.00px;font-size:17.4px;color:#0784c3;font-weight:400;">0xE7E03A0D...28Fc49D22</div>
<svg class="a" style="left:1025.10px;top:790.30px" width="17" height="19" viewBox="0 0 17 19"><path d="M8 2 H12.8 L15.6 4.8 V12 Q15.6 13.5 14.1 13.5 H8 Q6.5 13.5 6.5 12 V3.5 Q6.5 2 8 2 Z" fill="none" stroke="#adb5bd" stroke-width="1.6" stroke-linejoin="round"/><path d="M4 6.4 H3.8 Q2.2 6.4 2.2 8 V16.3 Q2.2 17.9 3.8 17.9 H9.7 Q11.2 17.9 11.2 16.3" fill="none" stroke="#adb5bd" stroke-width="1.6" stroke-linecap="round"/></svg>
<div class="a" style="left:1065px;top:787px;width:33px;height:29px;background:rgba(0,161,134,0.1);border:1px solid rgba(0,161,134,0.3);border-radius:7px;box-sizing:border-box;"></div>
<div class="t" style="left:1075.80px;top:795.00px;font-size:12.3px;color:#00a186;font-weight:700;">IN</div>
<svg class="a" style="left:1112px;top:784.0px" width="30" height="30" viewBox="0 0 30 30"><path d="M9.4 7.8 H15.6 L20.1 12.3 V23.1 Q20.1 24.1 19.1 24.1 H9.4 Q8.5 24.1 8.5 23.1 V8.8 Q8.5 7.8 9.4 7.8 Z" fill="none" stroke="#adb5bd" stroke-width="1.6" stroke-linejoin="round"/><path d="M15.2 7.8 V12.7 H20.1 Z" fill="#adb5bd"/><path d="M11 17 H17.7 M11 20.2 H17.7" stroke="#adb5bd" stroke-width="1.5" stroke-linecap="round"/></svg>
<div class="t" style="left:1138.60px;top:793.00px;font-size:17.7px;color:#212529;font-weight:400;">0xA3fC7eA5...5fF7C8AF6</div>
<svg class="a" style="left:1357.50px;top:790.30px" width="17" height="19" viewBox="0 0 17 19"><path d="M8 2 H12.8 L15.6 4.8 V12 Q15.6 13.5 14.1 13.5 H8 Q6.5 13.5 6.5 12 V3.5 Q6.5 2 8 2 Z" fill="none" stroke="#adb5bd" stroke-width="1.6" stroke-linejoin="round"/><path d="M4 6.4 H3.8 Q2.2 6.4 2.2 8 V16.3 Q2.2 17.9 3.8 17.9 H9.7 Q11.2 17.9 11.2 16.3" fill="none" stroke="#adb5bd" stroke-width="1.6" stroke-linecap="round"/></svg>
<div class="t" style="left:1474.00px;top:793.00px;font-size:17.1px;color:#212529;font-weight:400;">0 ETH</div>
<div class="t" style="left:1593.50px;top:793.50px;font-size:16px;color:#6c757d;font-weight:400;">0.00120185</div>
<div class="a" style="left:18px;top:831px;width:1699px;height:1px;background:#e9ecef;"></div>
<div class="a" style="left:39px;top:844px;width:35px;height:35px;background:#fff;border:1px solid #e9ecef;border-radius:8px;box-sizing:border-box;"></div>
<svg class="a" style="left:42px;top:846px" width="28" height="28" viewBox="0 0 28 28"><path d="M7.4 13.85 Q10.5 8.5 14.45 8.5 Q18.4 8.5 21.5 13.85 Q18.4 19.2 14.45 19.2 Q10.5 19.2 7.4 13.85 Z" fill="none" stroke="#081d35" stroke-width="1.2" stroke-linejoin="round"/><circle cx="14.4" cy="13.8" r="2.5" fill="none" stroke="#081d35" stroke-width="1.25"/><circle cx="13.5" cy="12.9" r="0.95" fill="#081d35"/></svg>
<div class="t" style="left:93.50px;top:852.00px;font-size:18px;color:#0784c3;font-weight:400;">0x77f356ea24a...</div>
<svg class="a" style="left:241.30px;top:850.30px" width="17" height="19" viewBox="0 0 17 19"><path d="M8 2 H12.8 L15.6 4.8 V12 Q15.6 13.5 14.1 13.5 H8 Q6.5 13.5 6.5 12 V3.5 Q6.5 2 8 2 Z" fill="none" stroke="#adb5bd" stroke-width="1.6" stroke-linejoin="round"/><path d="M4 6.4 H3.8 Q2.2 6.4 2.2 8 V16.3 Q2.2 17.9 3.8 17.9 H9.7 Q11.2 17.9 11.2 16.3" fill="none" stroke="#adb5bd" stroke-width="1.6" stroke-linecap="round"/></svg>
<div class="a" style="left:332px;top:846px;width:119px;height:30px;background:#f8f9fa;border:1px solid #dee2e6;border-radius:7px;box-sizing:border-box;"></div>
<div class="a" style="left:332px;top:846px;width:119px;height:30px;text-align:center"><div class="t" style="position:relative;top:8.00px;font-size:13.7px;letter-spacing:-0.25px;color:#212529;transform:scaleY(1.13);transform-origin:0 11px">0x60806040</div></div>
<div class="t" style="left:509.00px;top:852.00px;font-size:18px;color:#0784c3;font-weight:400;">20055783</div>
<div class="t" style="left:638.00px;top:853.00px;font-size:17.9px;color:#212529;font-weight:400;">160 days ago</div>
<div class="t" style="left:801.00px;top:853.00px;font-size:17.4px;color:#0784c3;font-weight:400;">0xE7E03A0D...28Fc49D22</div>
<svg class="a" style="left:1025.10px;top:850.30px" width="17" height="19" viewBox="0 0 17 19"><path d="M8 2 H12.8 L15.6 4.8 V12 Q15.6 13.5 14.1 13.5 H8 Q6.5 13.5 6.5 12 V3.5 Q6.5 2 8 2 Z" fill="none" stroke="#adb5bd" stroke-width="1.6" stroke-linejoin="round"/><path d="M4 6.4 H3.8 Q2.2 6.4 2.2 8 V16.3 Q2.2 17.9 3.8 17.9 H9.7 Q11.2 17.9 11.2 16.3" fill="none" stroke="#adb5bd" stroke-width="1.6" stroke-linecap="round"/></svg>
<div class="a" style="left:1065px;top:847px;width:33px;height:29px;background:rgba(0,161,134,0.1);border:1px solid rgba(0,161,134,0.3);border-radius:7px;box-sizing:border-box;"></div>
<div class="t" style="left:1075.80px;top:855.00px;font-size:12.3px;color:#00a186;font-weight:700;">IN</div>
<svg class="a" style="left:1119px;top:852px" width="19" height="16" viewBox="0 0 19 16"><path d="M4 1 H17 Q18 1 18 2 V14 Q18 15 17 15 H2.5 Q1 15 1 13.5 V4.5 H4 Z" fill="none" stroke="#adb5bd" stroke-width="1.5" stroke-linejoin="round"/><path d="M4 4 V14" stroke="#adb5bd" stroke-width="1.4"/><rect x="6.5" y="3.5" width="5" height="4" fill="#adb5bd"/><path d="M13 4.2 H16 M13 6.8 H16 M6.5 9.8 H16 M6.5 12.4 H16" stroke="#adb5bd" stroke-width="1.3"/></svg>
<div class="t" style="left:1143.00px;top:853.00px;font-size:17.6px;color:#212529;font-weight:400;">Create: PMFContract</div>
<svg class="a" style="left:1313.30px;top:850.30px" width="17" height="19" viewBox="0 0 17 19"><path d="M8 2 H12.8 L15.6 4.8 V12 Q15.6 13.5 14.1 13.5 H8 Q6.5 13.5 6.5 12 V3.5 Q6.5 2 8 2 Z" fill="none" stroke="#adb5bd" stroke-width="1.6" stroke-linejoin="round"/><path d="M4 6.4 H3.8 Q2.2 6.4 2.2 8 V16.3 Q2.2 17.9 3.8 17.9 H9.7 Q11.2 17.9 11.2 16.3" fill="none" stroke="#adb5bd" stroke-width="1.6" stroke-linecap="round"/></svg>
<div class="t" style="left:1474.00px;top:853.00px;font-size:17.1px;color:#212529;font-weight:400;">0 ETH</div>
<div class="t" style="left:1593.50px;top:853.50px;font-size:16px;color:#6c757d;font-weight:400;">0.03456618</div>
</body></html>
